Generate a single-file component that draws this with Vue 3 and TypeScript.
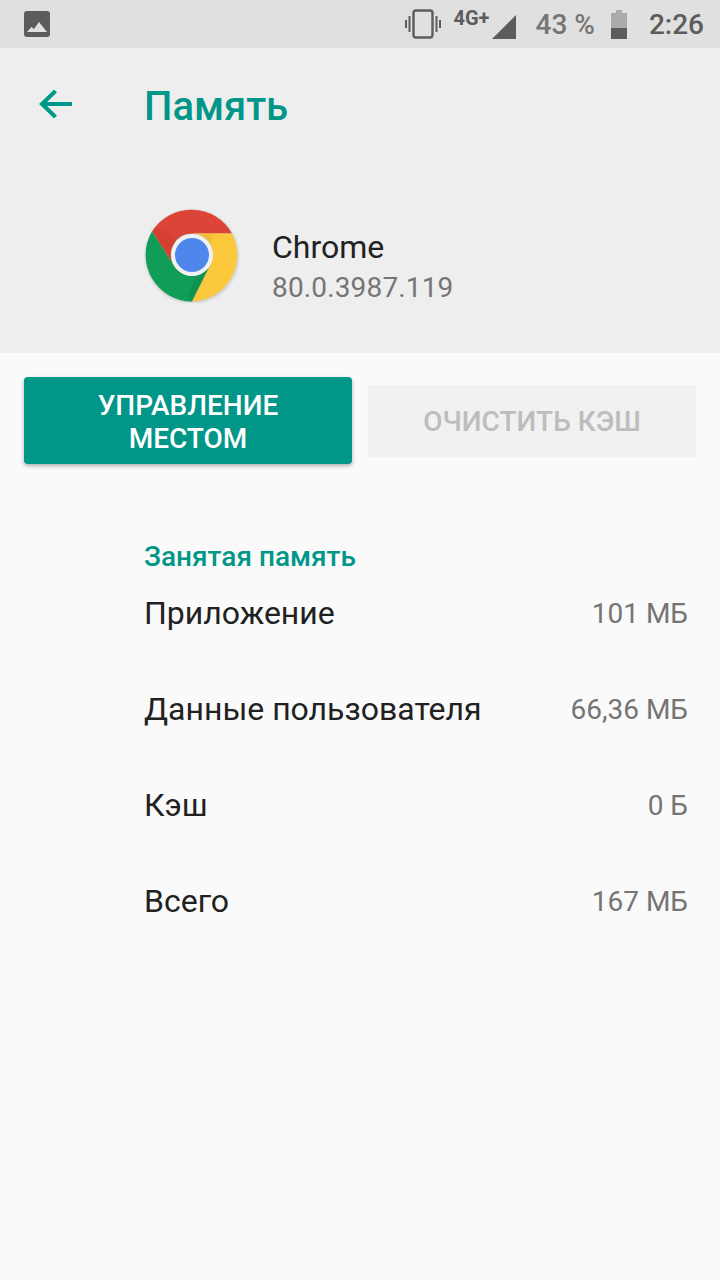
<script setup lang="ts">
const rows = [
  { label: 'Приложение', value: '101 МБ' },
  { label: 'Данные пользователя', value: '66,36 МБ' },
  { label: 'Кэш', value: '0 Б' },
  { label: 'Всего', value: '167 МБ' },
]
</script>

<template>
  <div class="screen">
    <div class="status-bar">
      <svg class="st-image" viewBox="0 0 26 26" width="26" height="26">
        <rect x="0" y="0" width="26" height="26" rx="3" fill="#5c5c5c" />
        <path d="M3 21l4.500-5 2.500 2 5-7 8 10z" fill="#e0e0e0" />
      </svg>
      <div class="st-right">
        <svg class="st-vibrate" viewBox="0 0 36 30" width="36" height="30">
          <rect x="8.500" y="1.500" width="19" height="27" rx="2.500" fill="none" stroke="#5c5c5c" stroke-width="2.400" />
          <path d="M4.500 7v16M1 11v8M31.500 7v16M35 11v8" stroke="#5c5c5c" stroke-width="2" fill="none" />
        </svg>
        <div class="st-net">
          <span class="st-4g">4G+</span>
          <svg viewBox="0 0 24 24" width="24" height="24" class="st-signal">
            <path d="M24 0v24H0z" fill="#5c5c5c" />
          </svg>
        </div>
        <span class="st-pct">43 %</span>
        <svg class="st-batt" viewBox="0 0 16 29" width="16" height="29">
          <path d="M5 0h6v3h5v26H0V3h5z" fill="#ababab" />
          <rect x="0" y="18" width="16" height="11" fill="#5c5c5c" />
        </svg>
        <span class="st-time">2:26</span>
      </div>
    </div>

    <header class="app-header">
      <div class="toolbar">
        <svg class="back" viewBox="0 0 34 30" width="34" height="30">
          <path d="M33 15H3M16.500 2L3 15l13.500 13" fill="none" stroke="#009688" stroke-width="4" />
        </svg>
        <h1 class="title">Память</h1>
      </div>
      <div class="app-info">
        <svg class="logo" viewBox="0 0 96 96" width="96" height="96">
          <defs>
            <filter id="soft" x="-20%" y="-20%" width="140%" height="140%">
              <feGaussianBlur stdDeviation="1.500" />
            </filter>
          </defs>
          <circle cx="48" cy="49.500" r="46.500" fill="#000" opacity="0.14" filter="url(#soft)" />
          <path d="M88 26.500A46.500 46.500 0 0 0 8 24.500L30 58.500A21 21 0 0 1 48 26.500Z" fill="#db4437" />
          <path d="M8 24.500A46.500 46.500 0 0 0 48 94.500L66 58.500A21 21 0 0 1 30 58.500Z" fill="#0f9d58" />
          <path d="M88 26.500A46.500 46.500 0 0 1 48 94.500L66 58.500A21 21 0 0 0 48 26.500Z" fill="#fdc93c" />
          <path d="M8 24.500L30 58.500 33 34 14 21z" fill="#a52714" opacity="0.14" filter="url(#soft)" />
          <path d="M48 94.500L66 58.500 54 66 44 88z" fill="#055524" opacity="0.16" filter="url(#soft)" />
          <path d="M48 27H70L66 36 58 30z" fill="#c98a17" opacity="0.22" filter="url(#soft)" />
          <circle cx="48" cy="48" r="21" fill="#f1f1f1" />
          <circle cx="48" cy="48" r="17" fill="#4e86ec" />
        </svg>
        <div class="app-text">
          <div class="app-name">Chrome</div>
          <div class="app-version">80.0.3987.119</div>
        </div>
      </div>
    </header>

    <div class="actions">
      <button class="btn primary">УПРАВЛЕНИЕ<br />МЕСТОМ</button>
      <button class="btn disabled">ОЧИСТИТЬ КЭШ</button>
    </div>

    <section class="storage">
      <h2 class="section-title">Занятая память</h2>
      <div v-for="r in rows" :key="r.label" class="row">
        <span class="row-label">{{ r.label }}</span>
        <span class="row-value">{{ r.value }}</span>
      </div>
    </section>
  </div>
</template>

<style>
html, body { margin: 0; background: #fafafa; }
</style>

<style scoped>
.screen {
  width: 720px;
  height: 1280px;
  overflow: hidden;
  background: #fafafa;
  font-family: Roboto, "Noto Sans", sans-serif;
  color: #212121;
}

/* status bar */
.status-bar {
  height: 48px;
  background: #e0e0e0;
  display: flex;
  align-items: center;
  justify-content: space-between;
  padding: 0 16px 0 24px;
  box-sizing: border-box;
}
.st-right { display: flex; align-items: center; }
.st-vibrate { margin-right: 12px; }
.st-net { display: flex; align-items: flex-end; position: relative; width: 62px; height: 28px; margin-right: 20px; }
.st-4g { font-size: 20px; font-weight: 700; color: #5c5c5c; line-height: 20px; position: absolute; left: 0; top: -2px; }
.st-signal { position: absolute; right: -1px; bottom: -1px; }
.st-pct { font-size: 28px; font-weight: 500; color: #757575; margin-right: 16px; }
.st-batt { margin-right: 22px; }
.st-time { font-size: 28px; font-weight: 500; color: #5c5c5c; }

/* header */
.app-header { height: 305px; background: #eeeeee; box-sizing: border-box; }
.toolbar { height: 112px; display: flex; align-items: center; padding-left: 39px; }
.back { margin-right: 71px; }
.title { margin: 0; font-size: 40px; font-weight: 500; color: #009688; line-height: 1; padding-top: 5px; }
.app-info { display: flex; align-items: flex-start; padding: 47px 0 0 144px; }
.logo { margin-right: 32px; }
.app-text { margin-top: 20px; }
.app-name { font-size: 32px; line-height: 40px; color: #212121; }
.app-version { font-size: 28px; line-height: 42px; color: #757575; letter-spacing: 0.15px; }

/* buttons */
.actions { display: flex; align-items: center; gap: 16px; padding: 24px 24px 0; }
.btn {
  flex: 1;
  border: none;
  border-radius: 4px;
  font-family: inherit;
  font-size: 28px;
  font-weight: 500;
  line-height: 33px;
  padding: 2px 0 0;
}
.primary { height: 87px; background: #009688; color: #fff; box-shadow: 0 2px 4px rgba(0,0,0,.3); }
.disabled { height: 72px; background: #f0f1f1; color: #bdbdbd; }

/* rows */
.storage { padding: 77px 32px 0 144px; }
.section-title { margin: 0 0 -8px; font-size: 28px; font-weight: 500; color: #009688; line-height: 32px; }
.row { height: 96px; display: flex; justify-content: space-between; align-items: center; }
.row-label { font-size: 32px; color: #212121; }
.row-value { font-size: 28px; color: #757575; }
</style>
